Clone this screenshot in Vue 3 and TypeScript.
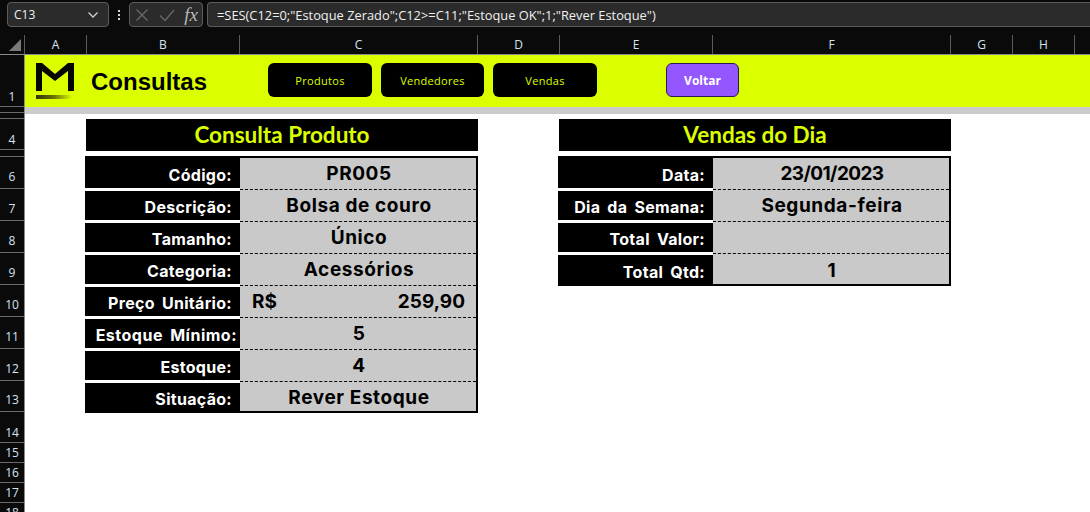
<script setup lang="ts">
interface Row {
  label: string
  value?: string
  price?: string
  tight?: boolean
  date?: boolean
}

const columns = [
  { name: 'A', width: 62 },
  { name: 'B', width: 153 },
  { name: 'C', width: 238 },
  { name: 'D', width: 82 },
  { name: 'E', width: 153 },
  { name: 'F', width: 238 },
  { name: 'G', width: 62 },
  { name: 'H', width: 62 },
]

const rowHeads = [
  { name: '1', height: 52 },
  { name: '', height: 6 },
  { name: '', height: 6 },
  { name: '4', height: 31 },
  { name: '', height: 7 },
  { name: '6', height: 32, raised: true },
  { name: '7', height: 32, raised: true },
  { name: '8', height: 32, raised: true },
  { name: '9', height: 32, raised: true },
  { name: '10', height: 32, raised: true },
  { name: '11', height: 32, raised: true },
  { name: '12', height: 32, raised: true },
  { name: '13', height: 31, raised: true },
  { name: '14', height: 31 },
  { name: '15', height: 20 },
  { name: '16', height: 20 },
  { name: '17', height: 20 },
  { name: '18', height: 20 },
]

const navButtons = ['Produtos', 'Vendedores', 'Vendas']

const produto: Row[] = [
  { label: 'Código:', value: 'PR005' },
  { label: 'Descrição:', value: 'Bolsa de couro' },
  { label: 'Tamanho:', value: 'Único' },
  { label: 'Categoria:', value: 'Acessórios' },
  { label: 'Preço Unitário:', price: '259,90' },
  { label: 'Estoque Mínimo:', value: '5', tight: true },
  { label: 'Estoque:', value: '4' },
  { label: 'Situação:', value: 'Rever Estoque' },
]

const vendas: Row[] = [
  { label: 'Data:', value: '23/01/2023', date: true },
  { label: 'Dia da Semana:', value: 'Segunda-feira' },
  { label: 'Total Valor:', value: '' },
  { label: 'Total Qtd:', value: '1' },
]

const panels = [
  { title: 'Consulta Produto', rows: produto, lastRow: 28 },
  { title: 'Vendas do Dia', rows: vendas, lastRow: 29 },
]

// first row is taller, it carries the top border of the block
function gridRows(count: number, lastRow: number) {
  return `35px repeat(${count - 2}, 32px) ${lastRow}px`
}
</script>

<template>
  <div class="excel">
    <div class="formula-bar">
      <div class="name-box">
        <span>C13</span>
        <svg width="12" height="8" viewBox="0 0 12 8" fill="none" stroke="#d0d0d0" stroke-width="1.3">
          <path d="M1.5 1.5 6 6l4.5-4.5" />
        </svg>
      </div>
      <div class="grip"><i /><i /><i /></div>
      <div class="fx-box">
        <svg width="14" height="14" viewBox="0 0 14 14" fill="none" stroke="#6a6a6a" stroke-width="1.2">
          <path d="M1.5 1.5l11 11M12.5 1.5l-11 11" />
        </svg>
        <svg width="16" height="14" viewBox="0 0 16 14" fill="none" stroke="#6a6a6a" stroke-width="1.2">
          <path d="M1 7.5l5 5L15 2" />
        </svg>
        <span class="fx">fx</span>
      </div>
      <div class="formula">=SES(C12=0;"Estoque Zerado";C12&gt;=C11;"Estoque OK";1;"Rever Estoque")</div>
    </div>

    <div class="col-heads">
      <div class="corner"><span class="corner-mark" /></div>
      <div v-for="col in columns" :key="col.name" class="col-head" :style="{ width: col.width + 'px' }">
        {{ col.name }}
      </div>
    </div>

    <div class="body">
      <div class="row-heads">
        <div
          v-for="(row, i) in rowHeads"
          :key="i"
          class="row-head"
          :class="{ raised: row.raised }"
          :style="{ height: row.height + 'px' }"
        >
          {{ row.name }}
        </div>
      </div>

      <div class="sheet">
        <header class="banner">
          <svg class="logo" width="40" height="38" viewBox="0 0 40 38">
            <defs>
              <linearGradient id="smear" x1="0" x2="1" y1="0" y2="0">
                <stop offset="0" stop-color="#34360a" />
                <stop offset="0.5" stop-color="#6b7200" />
                <stop offset="1" stop-color="#dcff00" />
              </linearGradient>
            </defs>
            <path d="M1 1h6l13 11L33 1h6v28h-6V9L20 19 7 9v20H1z" fill="#050500" />
            <rect x="1" y="33" width="36" height="4" fill="url(#smear)" />
          </svg>
          <h1 class="brand">Consultas</h1>
          <nav class="nav">
            <button v-for="b in navButtons" :key="b" class="nav-btn">{{ b }}</button>
          </nav>
          <button class="back-btn">Voltar</button>
        </header>
        <div class="band" />

        <main class="panels">
          <section v-for="p in panels" :key="p.title" class="panel">
            <h2 class="panel-title">{{ p.title }}</h2>
            <div class="grid" :style="{ gridTemplateRows: gridRows(p.rows.length, p.lastRow) }">
              <template v-for="r in p.rows" :key="r.label">
                <div class="label" :class="{ tight: r.tight }">{{ r.label }}</div>
                <div v-if="r.price" class="value price">
                  <span>R$</span><span>{{ r.price }}</span>
                </div>
                <div v-else class="value" :class="{ date: r.date }">{{ r.value }}</div>
              </template>
            </div>
          </section>
        </main>
      </div>
    </div>
  </div>
</template>

<style>
html,
body {
  margin: 0;
  overflow: hidden;
  background: #fff;
}
</style>

<style scoped>
.excel {
  width: 1090px;
  height: 512px;
  overflow: hidden;
  display: flex;
  flex-direction: column;
  font-family: "Open Sans", sans-serif;
}

.formula-bar {
  height: 28px;
  box-sizing: border-box;
  padding: 2px 0 1px 7px;
  display: flex;
  align-items: stretch;
  background: #0a0a0a;
  color: #f0f0f0;
  font-size: 12px;
}

.name-box {
  width: 102px;
  box-sizing: border-box;
  padding: 0 9px 0 6px;
  display: flex;
  align-items: center;
  justify-content: space-between;
  background: #2b2b2b;
  border: 1px solid #5c5c5c;
  border-radius: 4px;
}

.grip {
  width: 20px;
  display: flex;
  flex-direction: column;
  align-items: center;
  justify-content: center;
  gap: 2px;
}

.grip i {
  width: 2px;
  height: 2px;
  background: #d8d8d8;
}

.fx-box {
  width: 74px;
  box-sizing: border-box;
  padding: 0 4px 0 5px;
  display: flex;
  align-items: center;
  justify-content: space-between;
  background: #2b2b2b;
  border: 1px solid #5c5c5c;
  border-radius: 4px;
}

.fx {
  font-family: "Liberation Serif", serif;
  font-style: italic;
  font-size: 19px;
  color: #b8b8b8;
}

.formula {
  flex: 1;
  margin-left: 4px;
  padding-left: 9px;
  display: flex;
  align-items: center;
  background: #2b2b2b;
  border: 1px solid #5c5c5c;
  border-right: none;
  border-radius: 4px 0 0 4px;
  font-size: 12.85px;
  white-space: nowrap;
}

.col-heads {
  height: 27px;
  box-sizing: border-box;
  display: flex;
  background: #0a0a0a;
  border-bottom: 1px solid #8a8a8a;
}

.corner {
  width: 25px;
  height: 19px;
  margin-top: 7px;
  box-sizing: border-box;
  position: relative;
  border-right: 1px solid #5c5c5c;
}

.corner-mark {
  position: absolute;
  right: 3px;
  bottom: 3px;
  width: 0;
  height: 0;
  border-style: solid;
  border-width: 0 0 12px 12px;
  border-color: transparent transparent #7a7a7a transparent;
}

.col-head {
  height: 19px;
  margin-top: 7px;
  box-sizing: border-box;
  display: flex;
  align-items: center;
  justify-content: center;
  border-right: 1px solid #5c5c5c;
  color: #d4e4f2;
  font-size: 12px;
}

.body {
  flex: 1;
  display: flex;
  min-height: 0;
}

.row-heads {
  width: 25px;
  flex: none;
  background: #0a0a0a;
  border-right: 1px solid #8a8a8a;
  box-sizing: border-box;
}

.row-head {
  box-sizing: border-box;
  padding-bottom: 1px;
  overflow: hidden;
  display: flex;
  align-items: flex-end;
  justify-content: center;
  border-bottom: 1px solid #6a6a6a;
  color: #d4e4f2;
  font-size: 12px;
  line-height: 16px;
}

.row-head.raised {
  padding-bottom: 3px;
}

.sheet {
  flex: 1;
  min-width: 0;
  background: #fff;
}

.banner {
  height: 52px;
  box-sizing: border-box;
  display: flex;
  align-items: center;
  padding-left: 10px;
  background: #dcff00;
}

.logo {
  flex: none;
}

.brand {
  width: 177px;
  margin: 2px 0 0 16px;
  font-family: "Liberation Sans", Arial, sans-serif;
  font-size: 24px;
  font-weight: 700;
  color: #000;
}

.nav {
  display: flex;
  gap: 9px;
  margin-bottom: 2px;
}

.nav-btn {
  width: 104px;
  height: 34px;
  padding: 0;
  border: none;
  border-radius: 6px;
  background: #000;
  color: #dcff00;
  font-family: "Open Sans", sans-serif;
  font-size: 11px;
  letter-spacing: 0.3px;
}

.nav-btn:nth-child(2) {
  width: 103px;
}

.back-btn {
  width: 73px;
  height: 34px;
  margin: 0 0 2px 69px;
  padding: 0;
  border: 1px solid #2a1a55;
  border-radius: 6px;
  background: #9457ff;
  color: #fff;
  font-family: "Open Sans", sans-serif;
  font-size: 12px;
  font-weight: 700;
}

.band {
  height: 7px;
  background: #cbcbcb;
}

.panels {
  display: flex;
  gap: 80px;
  padding: 5px 0 0 60px;
}

.panel {
  width: 393px;
}

.panel-title {
  height: 32px;
  box-sizing: border-box;
  margin: 0 0 5px 1px;
  padding-bottom: 2px;
  display: flex;
  align-items: center;
  justify-content: center;
  background: #000;
  color: #dcff00;
  font-family: Lato, "Open Sans", sans-serif;
  font-size: 22.5px;
  font-weight: 700;
}

.grid {
  display: grid;
  grid-template-columns: 155px 1fr;
  box-sizing: content-box;
  width: 391px;
  background: #c9c9c9;
  border-right: 2px solid #000;
  border-bottom: 2px solid #000;
  font-family: Inter, "Open Sans", sans-serif;
  font-weight: 700;
}

.label {
  box-sizing: border-box;
  padding: 0 8px 5px 0;
  display: flex;
  align-items: flex-end;
  justify-content: flex-end;
  white-space: pre;
  background: #000;
  border-bottom: 3px solid #fff;
  color: #fff;
  font-size: 16px;
  line-height: 16px;
  letter-spacing: 0.3px;
  word-spacing: 3px;
}

.label:nth-last-child(2) {
  padding-bottom: 4px;
  border-bottom: none;
}

.label.tight {
  padding-right: 3px;
  letter-spacing: 0.5px;
}

.value {
  box-sizing: border-box;
  margin-bottom: 1px;
  padding: 0 0 5px 2px;
  display: flex;
  align-items: flex-end;
  justify-content: center;
  background: #c9c9c9;
  border-bottom: 1px dashed #000;
  color: #000;
  font-size: 19px;
  line-height: 20px;
  letter-spacing: 0.6px;
}

.value:nth-child(2) {
  border-top: 2px solid #000;
}

.value:last-child {
  margin-bottom: 0;
  padding-bottom: 3px;
  border-bottom: none;
}

.value.date {
  letter-spacing: -0.6px;
}

.price {
  justify-content: space-between;
  padding-left: 12px;
  padding-right: 11px;
  letter-spacing: 0;
}
</style>
